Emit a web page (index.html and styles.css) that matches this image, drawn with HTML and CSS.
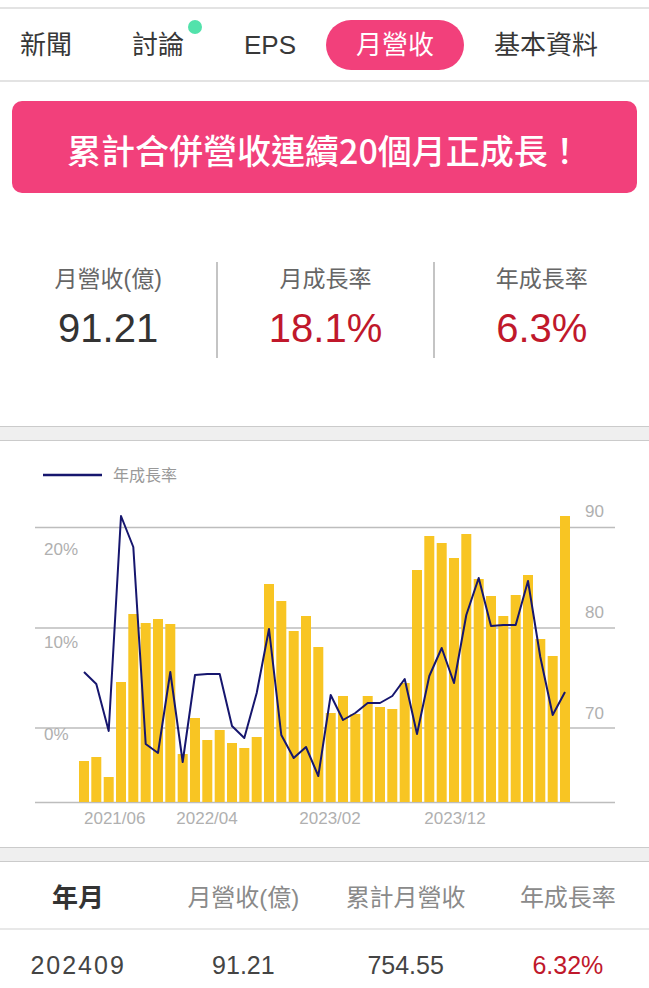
FILE: index.html
```html
<!DOCTYPE html>
<html lang="zh-TW">
<head>
    <meta charset="UTF-8">
    <meta name="viewport" content="width=device-width, initial-scale=1.0">
    <title>月營收</title>
    <link rel="stylesheet" href="styles.css">
</head>
<body>
    <nav class="tabs">
        <span class="tab">新聞</span>
        <span class="tab">討論<i class="dot"></i></span>
        <span class="tab">EPS</span>
        <span class="tab active">月營收</span>
        <span class="tab">基本資料</span>
    </nav>

    <div class="banner">累計合併營收連續20個月正成長！</div>

    <div class="stats">
        <div class="stat">
            <div class="stat-label">月營收(億)</div>
            <div class="stat-value">91.21</div>
        </div>
        <div class="stat">
            <div class="stat-label">月成長率</div>
            <div class="stat-value up">18.1%</div>
        </div>
        <div class="stat">
            <div class="stat-label">年成長率</div>
            <div class="stat-value up">6.3%</div>
        </div>
    </div>

    <div class="band"></div>

    <div class="chart">
        <svg width="649" height="406" viewBox="0 441 649 406">
            <!-- legend -->
            <line x1="43" y1="475" x2="102" y2="475" stroke="#16166e" stroke-width="2.5"/>
            <text x="113" y="481" class="legend">年成長率</text>

            <!-- grid -->
            <g stroke="#bdbdbd" stroke-width="1.3">
                <line x1="35" y1="527.5" x2="615" y2="527.5"/>
                <line x1="35" y1="628" x2="615" y2="628"/>
                <line x1="35" y1="728" x2="615" y2="728"/>
                <line x1="35" y1="802.5" x2="615" y2="802.5"/>
            </g>

            <!-- revenue bars -->
            <g fill="#f8c523">
                <rect x="79" y="761" width="10" height="41"/>
                <rect x="91.3" y="757" width="10" height="45"/>
                <rect x="103.7" y="777" width="10" height="25"/>
                <rect x="116" y="682" width="10" height="120"/>
                <rect x="128.3" y="614" width="10" height="188"/>
                <rect x="140.7" y="623" width="10" height="179"/>
                <rect x="153" y="619" width="10" height="183"/>
                <rect x="165.3" y="624" width="10" height="178"/>
                <rect x="177.7" y="754" width="10" height="48"/>
                <rect x="190" y="718" width="10" height="84"/>
                <rect x="202.3" y="740" width="10" height="62"/>
                <rect x="214.7" y="730" width="10" height="72"/>
                <rect x="227" y="743" width="10" height="59"/>
                <rect x="239.3" y="748" width="10" height="54"/>
                <rect x="251.7" y="737" width="10" height="65"/>
                <rect x="264" y="584" width="10" height="218"/>
                <rect x="276.3" y="601" width="10" height="201"/>
                <rect x="288.7" y="631" width="10" height="171"/>
                <rect x="301" y="616" width="10" height="186"/>
                <rect x="313.3" y="647" width="10" height="155"/>
                <rect x="325.7" y="713" width="10" height="89"/>
                <rect x="338" y="696" width="10" height="106"/>
                <rect x="350.3" y="714" width="10" height="88"/>
                <rect x="362.7" y="696" width="10" height="106"/>
                <rect x="375" y="707" width="10" height="95"/>
                <rect x="387.3" y="709" width="10" height="93"/>
                <rect x="399.7" y="683" width="10" height="119"/>
                <rect x="412" y="570" width="10" height="232"/>
                <rect x="424.3" y="536" width="10" height="266"/>
                <rect x="436.7" y="543" width="10" height="259"/>
                <rect x="449" y="558" width="10" height="244"/>
                <rect x="461.3" y="534" width="10" height="268"/>
                <rect x="473.7" y="579" width="10" height="223"/>
                <rect x="486" y="596" width="10" height="206"/>
                <rect x="498.3" y="616" width="10" height="186"/>
                <rect x="510.7" y="595" width="10" height="207"/>
                <rect x="523" y="575" width="10" height="227"/>
                <rect x="535.3" y="639" width="10" height="163"/>
                <rect x="547.7" y="656" width="10" height="146"/>
                <rect x="560" y="516" width="10" height="286"/>
            </g>

            <!-- yoy line -->
            <polyline fill="none" stroke="#16166e" stroke-width="2" stroke-linejoin="round"
                points="84,672 96.3,684 108.7,731 121,516 133.3,547 145.7,744 158,753 170.3,672 182.7,762 195,675 207.3,674 219.7,674 232,726 244.3,738 256.7,693 269,629 281.3,735 293.7,758 306,747 318.3,776 330.7,695 343,720 355.3,713 367.7,703 380,703 392.3,696 404.7,679 417,734 429.3,676 441.7,648 454,683 466.3,615 478.7,578 491,626 503.3,625 515.7,625 528,581 540.3,657 552.7,715 565,692"/>

            <!-- axes -->
            <g class="axis">
                <text x="44" y="555">20%</text>
                <text x="44" y="648">10%</text>
                <text x="44" y="740">0%</text>
                <text x="585" y="517">90</text>
                <text x="585" y="618">80</text>
                <text x="585" y="719">70</text>
                <text x="84" y="824">2021/06</text>
                <text x="207" y="824" text-anchor="middle">2022/04</text>
                <text x="330" y="824" text-anchor="middle">2023/02</text>
                <text x="455" y="824" text-anchor="middle">2023/12</text>
            </g>
        </svg>
    </div>

    <div class="band"></div>

    <div class="table">
        <div class="row head">
            <span class="first">年月</span>
            <span>月營收(億)</span>
            <span>累計月營收</span>
            <span>年成長率</span>
        </div>
        <div class="row">
            <span class="first">202409</span>
            <span>91.21</span>
            <span>754.55</span>
            <span class="up">6.32%</span>
        </div>
    </div>
</body>
</html>
```

FILE: styles.css
```css
body {
    margin: 0;
    padding: 0;
    background-color: #fff;
    font-family: "Liberation Sans", "Noto Sans CJK TC", sans-serif;
    color: #333;
}

.tabs {
    display: flex;
    align-items: center;
    height: 71px;
    margin-top: 7px;
    border-top: 2px solid #e3e3e3;
    border-bottom: 2px solid #e3e3e3;
}

.tab {
    position: relative;
    padding: 0 30px;
    height: 50px;
    line-height: 50px;
    font-size: 26px;
    color: #383838;
    white-space: nowrap;
}

.tab:first-child {
    padding-left: 20px;
}

.tab.active {
    background-color: #f2407b;
    color: #fff;
    border-radius: 25px;
}

.dot {
    position: absolute;
    top: 0;
    right: 12px;
    width: 14px;
    height: 14px;
    border-radius: 50%;
    background-color: #52e2ab;
}

.banner {
    display: flex;
    align-items: center;
    justify-content: center;
    height: 92px;
    margin: 19px 12px 0;
    padding-top: 4px;
    box-sizing: border-box;
    background-color: #f2407b;
    border-radius: 10px;
    color: #fff;
    font-family: "Noto Sans CJK TC", "Liberation Sans", sans-serif;
    font-size: 34px;
    font-weight: 500;
}

.stats {
    display: grid;
    grid-template-columns: repeat(3, 1fr);
    margin-top: 69px;
}

.stat {
    padding: 1px 0 7px;
    text-align: center;
}

.stat + .stat {
    border-left: 2px solid #c4c4c4;
}

.stat-label {
    font-size: 23px;
    line-height: 32px;
    color: #666;
}

.stat-value {
    margin-top: 10px;
    font-size: 40px;
    line-height: 46px;
    color: #333;
}

.up {
    color: #c0182b;
}

.band {
    height: 13px;
    background-color: #efefef;
    border-top: 1px solid #cbcbcb;
    border-bottom: 1px solid #cbcbcb;
}

.stats + .band {
    margin-top: 68px;
}

.chart svg {
    display: block;
}

.legend {
    font-size: 16px;
    fill: #999;
}

.axis text {
    font-size: 17px;
    fill: #b0b0b0;
}

.row {
    display: grid;
    grid-template-columns: repeat(4, 1fr);
    align-items: center;
    text-align: center;
    height: 70px;
    font-size: 25px;
    color: #444;
}

.row .first {
    padding-right: 6px;
}

.row:not(.head) .first {
    letter-spacing: 2px;
}

.row.head {
    height: 66px;
    border-bottom: 2px solid #e8e8e8;
    font-size: 24px;
    color: #8a8a8a;
}

.row.head .first {
    font-size: 26px;
    font-weight: bold;
    color: #333;
}
```
